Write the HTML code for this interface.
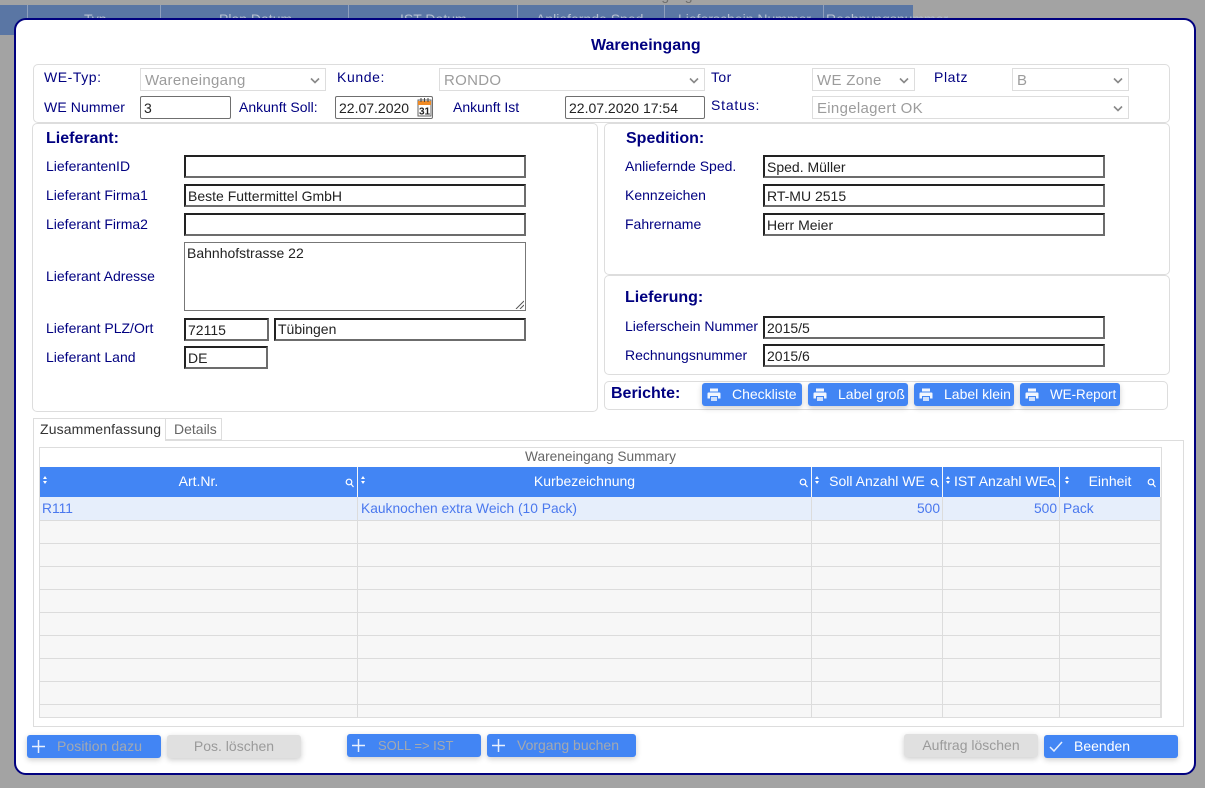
<!DOCTYPE html>
<html><head><meta charset="utf-8"><title>Wareneingang</title>
<style>
html,body{margin:0;padding:0;width:1205px;height:788px;overflow:hidden;background:#a3a3a3;font-family:"Liberation Sans",sans-serif;font-size:14px}
div,span,svg{position:absolute;box-sizing:border-box}
.t{white-space:nowrap;color:#000080;line-height:16px}
.box{background:#fff;border:1px solid #ddd;border-radius:5px}
.sel{background:#fff;border:1px solid #ddd;color:#9c9c9c;font-size:15px;line-height:23px;padding-left:4px;white-space:nowrap;letter-spacing:.3px;height:23px}
.sel svg{right:5px;top:8px;width:10px;height:7px}
.in1{background:#fff;border:1px solid #6f6f6f;border-radius:2px;color:#222;line-height:22px;padding-left:3px;height:23px;white-space:nowrap}
.in2{background:#fff;border:2px solid;border-color:#222 #6c6c6c #6c6c6c #222;color:#222;line-height:21px;padding-left:2px;height:23px;white-space:nowrap}
.h{font-weight:bold;font-size:16px;line-height:18px;color:#000080;white-space:nowrap}
.b{background:#4285f4;color:#fff;border-radius:3px;height:23px;box-shadow:0 2px 6px rgba(0,0,0,.2);font-size:14px;line-height:23px;white-space:nowrap}
.b span{top:0;white-space:nowrap}
.g{background:#e0e0e0;color:#9a9a9a;text-align:center}
.dim{color:#a4a9b0}
.th{background:#4285f4;color:#fff;top:467px;height:30px;font-size:14px;line-height:28px;text-align:center;white-space:nowrap}
.c{color:#4a78ee;font-size:13.8px;line-height:23px;white-space:nowrap;top:497px}
.vl{width:1px;background:#dcdcdc;top:497px;height:221px}
.hl{height:1px;background:#dcdcdc;left:40px;width:1121px}
.bh{top:5px;color:#b6c0d0;font-size:14px;line-height:24px;white-space:nowrap}
</style></head>
<body>
<div class="t" style="left:602px;top:-13px;color:#6e6e6e">Wareneingang</div>
<div style="left:0;top:5px;width:913px;height:30px;background:#5a76a4"></div>
<div class="bh" style="left:84px;top:7px">Typ</div>
<div class="bh" style="left:219px;top:7px">Plan Datum</div>
<div class="bh" style="left:400px;top:7px">IST Datum</div>
<div class="bh" style="left:536px;top:7px">Anliefernde Sped.</div>
<div class="bh" style="left:678px;top:7px">Lieferschein Nummer</div>
<div class="bh" style="left:826px;top:7px">Rechnungsnummer</div>
<div style="left:27px;top:5px;width:1px;height:20px;background:#8fa0bd"></div>
<div style="left:160px;top:5px;width:1px;height:20px;background:#8fa0bd"></div>
<div style="left:348px;top:5px;width:1px;height:20px;background:#8fa0bd"></div>
<div style="left:517px;top:5px;width:1px;height:20px;background:#8fa0bd"></div>
<div style="left:664px;top:5px;width:1px;height:20px;background:#8fa0bd"></div>
<div style="left:823px;top:5px;width:1px;height:20px;background:#8fa0bd"></div>

<div style="left:14px;top:18px;width:1182px;height:757px;background:#fff;border:2px solid #00007f;border-radius:12px"></div>
<div class="h" style="left:591px;top:37px">Wareneingang</div>

<div class="box" style="left:33px;top:64px;width:1137px;height:59px"></div>
<div class="t" style="left:44px;top:69px;letter-spacing:.55px">WE-Typ:</div>
<div class="sel" style="left:140px;top:68px;width:186px">Wareneingang<svg viewBox="0 0 10 7"><path d="M1 1.500L5 5.500L9 1.500" fill="none" stroke="#888" stroke-width="1.600"/></svg></div>
<div class="t" style="left:337px;top:69px;letter-spacing:.6px">Kunde:</div>
<div class="sel" style="left:439px;top:68px;width:266px">RONDO<svg viewBox="0 0 10 7"><path d="M1 1.500L5 5.500L9 1.500" fill="none" stroke="#888" stroke-width="1.600"/></svg></div>
<div class="t" style="left:711px;top:69px;letter-spacing:.4px">Tor</div>
<div class="sel" style="left:812px;top:68px;width:103px">WE Zone<svg viewBox="0 0 10 7"><path d="M1 1.500L5 5.500L9 1.500" fill="none" stroke="#888" stroke-width="1.600"/></svg></div>
<div class="t" style="left:934px;top:69px;letter-spacing:.6px">Platz</div>
<div class="sel" style="left:1012px;top:68px;width:117px">B<svg viewBox="0 0 10 7"><path d="M1 1.500L5 5.500L9 1.500" fill="none" stroke="#888" stroke-width="1.600"/></svg></div>

<div class="t" style="left:44px;top:99px;letter-spacing:.1px">WE Nummer</div>
<div class="in1" style="left:140px;top:96px;width:91px">3</div>
<div class="t" style="left:239px;top:99px">Ankunft Soll:</div>
<div class="in1" style="left:335px;top:96px;width:98px">22.07.2020</div>
<svg style="left:417px;top:98px;width:15px;height:19px" viewBox="0 0 15 19"><rect x="1" y="2" width="13" height="16" fill="#fff" stroke="#666"/><rect x="1" y="3" width="13" height="4" fill="#f08a24"/><path d="M4 0v4M7.500 0v4M11 0v4" stroke="#444" stroke-width="1"/><text x="7.500" y="16.500" font-family="Liberation Sans" font-size="10" font-weight="bold" text-anchor="middle" fill="#222">31</text></svg>
<div class="t" style="left:453px;top:99px">Ankunft Ist</div>
<div class="in1" style="left:565px;top:96px;width:140px">22.07.2020 17:54</div>
<div class="t" style="left:711px;top:97px;letter-spacing:.8px">Status:</div>
<div class="sel" style="left:812px;top:96px;width:317px">Eingelagert OK<svg viewBox="0 0 10 7"><path d="M1 1.500L5 5.500L9 1.500" fill="none" stroke="#888" stroke-width="1.600"/></svg></div>

<div class="box" style="left:32px;top:123px;width:566px;height:289px"></div>
<div class="h" style="left:46px;top:130px">Lieferant:</div>
<div class="t" style="left:46px;top:158px">LieferantenID</div>
<div class="in2" style="left:184px;top:155px;width:342px"></div>
<div class="t" style="left:46px;top:187px">Lieferant Firma1</div>
<div class="in2" style="left:184px;top:184px;width:342px">Beste Futtermittel GmbH</div>
<div class="t" style="left:46px;top:216px">Lieferant Firma2</div>
<div class="in2" style="left:184px;top:213px;width:342px"></div>
<div class="t" style="left:46px;top:268px">Lieferant Adresse</div>
<div style="left:184px;top:242px;width:342px;height:69px;border:1px solid #777;color:#222;padding:1px 2px;line-height:18px;background:#fff">Bahnhofstrasse 22<svg style="right:1px;bottom:1px;width:9px;height:9px" viewBox="0 0 9 9"><path d="M1 9L9 1M5 9L9 5" stroke="#555" stroke-width="1"/></svg></div>
<div class="t" style="left:46px;top:320px">Lieferant PLZ/Ort</div>
<div class="in2" style="left:184px;top:318px;width:85px;line-height:20px">72115</div>
<div class="in2" style="left:274px;top:318px;width:252px;line-height:19px">Tübingen</div>
<div class="t" style="left:46px;top:349px">Lieferant Land</div>
<div class="in2" style="left:184px;top:346px;width:84px">DE</div>

<div class="box" style="left:604px;top:123px;width:566px;height:152px"></div>
<div class="h" style="left:626px;top:130px">Spedition:</div>
<div class="t" style="left:625px;top:158px">Anliefernde Sped.</div>
<div class="in2" style="left:763px;top:155px;width:342px">Sped. Müller</div>
<div class="t" style="left:625px;top:187px">Kennzeichen</div>
<div class="in2" style="left:763px;top:184px;width:342px">RT-MU 2515</div>
<div class="t" style="left:625px;top:216px">Fahrername</div>
<div class="in2" style="left:763px;top:213px;width:342px">Herr Meier</div>

<div class="box" style="left:604px;top:275px;width:566px;height:100px"></div>
<div class="h" style="left:625px;top:289px">Lieferung:</div>
<div class="t" style="left:625px;top:318px">Lieferschein Nummer</div>
<div class="in2" style="left:763px;top:316px;width:342px">2015/5</div>
<div class="t" style="left:625px;top:347px">Rechnungsnummer</div>
<div class="in2" style="left:763px;top:344px;width:342px">2015/6</div>

<div class="box" style="left:604px;top:381px;width:564px;height:29px"></div>
<div class="h" style="left:611px;top:385px">Berichte:</div>
<div class="b" style="left:702px;top:383px;width:100px"><svg style="left:5px;top:4px;width:14px;height:15px" viewBox="0 0 14 15"><path d="M3 1.500h8v3H3zM1.500 5.500h11a1 1 0 0 1 1 1v5h-2.500V9H3v2.500H.500v-5a1 1 0 0 1 1-1z" fill="#f2f6fe"/><path d="M4 10h6v4H4z" fill="#cfe0fc"/></svg><span style="left:30px">Checkliste</span></div>
<div class="b" style="left:808px;top:383px;width:100px"><svg style="left:5px;top:4px;width:14px;height:15px" viewBox="0 0 14 15"><path d="M3 1.500h8v3H3zM1.500 5.500h11a1 1 0 0 1 1 1v5h-2.500V9H3v2.500H.500v-5a1 1 0 0 1 1-1z" fill="#f2f6fe"/><path d="M4 10h6v4H4z" fill="#cfe0fc"/></svg><span style="left:30px">Label groß</span></div>
<div class="b" style="left:914px;top:383px;width:100px"><svg style="left:5px;top:4px;width:14px;height:15px" viewBox="0 0 14 15"><path d="M3 1.500h8v3H3zM1.500 5.500h11a1 1 0 0 1 1 1v5h-2.500V9H3v2.500H.500v-5a1 1 0 0 1 1-1z" fill="#f2f6fe"/><path d="M4 10h6v4H4z" fill="#cfe0fc"/></svg><span style="left:30px">Label klein</span></div>
<div class="b" style="left:1020px;top:383px;width:100px"><svg style="left:5px;top:4px;width:14px;height:15px" viewBox="0 0 14 15"><path d="M3 1.500h8v3H3zM1.500 5.500h11a1 1 0 0 1 1 1v5h-2.500V9H3v2.500H.500v-5a1 1 0 0 1 1-1z" fill="#f2f6fe"/><path d="M4 10h6v4H4z" fill="#cfe0fc"/></svg><span style="left:30px;font-size:13.4px">WE-Report</span></div>

<div style="left:33px;top:440px;width:1151px;height:287px;border:1px solid #ddd"></div>
<div style="left:33px;top:418px;width:133px;height:23px;border:1px solid #ddd;border-bottom:0;background:#fff;color:#333;line-height:21px;padding-left:6px;white-space:nowrap;letter-spacing:.14px">Zusammenfassung</div>
<div style="left:166px;top:418px;width:56px;height:22px;border:1px solid #ddd;border-left:0;background:#fff;color:#666;line-height:21px;padding-left:8px;white-space:nowrap">Details</div>

<div style="left:39px;top:447px;width:1123px;height:271px;border:1px solid #ddd;background:#f7f7f7"></div>
<div style="left:40px;top:448px;width:1121px;height:19px;background:#fff;color:#666;text-align:center;line-height:17px;font-size:13.7px">Wareneingang Summary</div>

<div class="th" style="left:40px;width:317px">Art.Nr.</div>
<div class="th" style="left:358px;width:453px">Kurbezeichnung</div>
<div class="th" style="left:812px;width:130px">Soll Anzahl WE</div>
<div class="th" style="left:943px;width:116px">IST Anzahl WE</div>
<div class="th" style="left:1060px;width:100px">Einheit</div>
<svg style="left:0;top:467px;width:1205px;height:30px" viewBox="0 0 1205 30"><g fill="#fff"><path d="M43 12l2-3 2 3zM43 14l2 3 2-3z"/><path d="M361 12l2-3 2 3zM361 14l2 3 2-3z"/><path d="M815 12l2-3 2 3zM815 14l2 3 2-3z"/><path d="M946 12l2-3 2 3zM946 14l2 3 2-3z"/><path d="M1065 12l2-3 2 3zM1065 14l2 3 2-3z"/></g><g fill="none" stroke="#fff" stroke-width="1.200"><circle cx="349" cy="15" r="2.800"/><path d="M351 17l2.500 3"/><circle cx="803" cy="15" r="2.800"/><path d="M805 17l2.500 3"/><circle cx="934" cy="15" r="2.800"/><path d="M936 17l2.500 3"/><circle cx="1051" cy="15" r="2.800"/><path d="M1053 17l2.500 3"/><circle cx="1151" cy="15" r="2.800"/><path d="M1153 17l2.500 3"/></g></svg>

<div style="left:40px;top:497px;width:1121px;height:23px;background:#e6eefb"></div>
<div class="hl" style="top:520px"></div><div class="hl" style="top:543px"></div><div class="hl" style="top:566px"></div><div class="hl" style="top:589px"></div><div class="hl" style="top:612px"></div><div class="hl" style="top:635px"></div><div class="hl" style="top:658px"></div><div class="hl" style="top:681px"></div><div class="hl" style="top:704px"></div>
<div class="vl" style="left:357px"></div><div class="vl" style="left:811px"></div><div class="vl" style="left:942px"></div><div class="vl" style="left:1059px"></div><div class="vl" style="left:1160px"></div>
<div class="c" style="left:42px">R111</div>
<div class="c" style="left:361px">Kauknochen extra Weich (10 Pack)</div>
<div class="c" style="left:812px;width:128px;text-align:right">500</div>
<div class="c" style="left:943px;width:114px;text-align:right">500</div>
<div class="c" style="left:1063px">Pack</div>

<div class="b" style="left:27px;top:735px;width:134px"><svg style="left:5px;top:5px;width:13px;height:13px" viewBox="0 0 13 13"><path d="M6.500 0v13M0 6.500h13" stroke="#e8f0fe" stroke-width="1.500"/></svg><span class="dim" style="left:30px;letter-spacing:.08px">Position dazu</span></div>
<div class="b g" style="left:167px;top:735px;width:134px">Pos. löschen</div>
<div class="b" style="left:347px;top:734px;width:134px"><svg style="left:5px;top:5px;width:13px;height:13px" viewBox="0 0 13 13"><path d="M6.500 0v13M0 6.500h13" stroke="#e8f0fe" stroke-width="1.500"/></svg><span class="dim" style="left:31px;font-size:13px">SOLL =&gt; IST</span></div>
<div class="b" style="left:487px;top:734px;width:149px"><svg style="left:5px;top:5px;width:13px;height:13px" viewBox="0 0 13 13"><path d="M6.500 0v13M0 6.500h13" stroke="#e8f0fe" stroke-width="1.500"/></svg><span class="dim" style="left:30px">Vorgang buchen</span></div>
<div class="b g" style="left:904px;top:734px;width:134px">Auftrag löschen</div>
<div class="b" style="left:1044px;top:735px;width:134px"><svg style="left:5px;top:6px;width:14px;height:11px" viewBox="0 0 14 11"><path d="M1 6l4 4L13 1" fill="none" stroke="#e8f0fe" stroke-width="1.500"/></svg><span style="left:30px">Beenden</span></div>
</body></html>
